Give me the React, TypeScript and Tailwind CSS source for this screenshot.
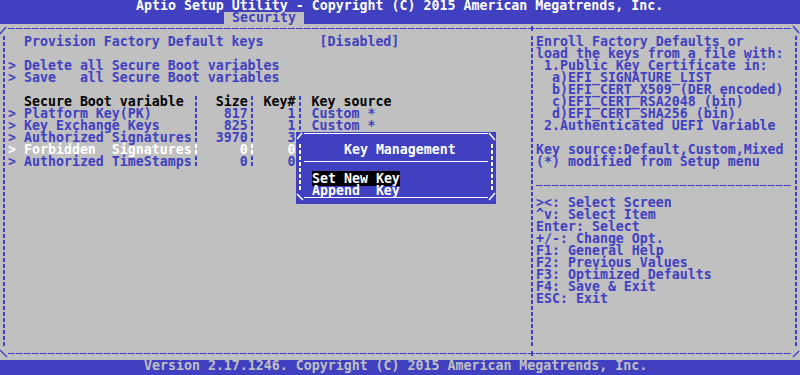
import React from "react";

type Entry = { name: string; size: string; n: string; src: string; hot?: boolean };

const vars: Entry[] = [
  { name: "Platform Key(PK)", size: "817", n: "1", src: "Custom *" },
  { name: "Key Exchange Keys", size: "825", n: "1", src: "Custom *" },
  { name: "Authorized Signatures", size: "3970", n: "3", src: "Custom *" },
  { name: "Forbidden  Signatures", size: "0", n: "0", src: "No Keys", hot: true },
  { name: "Authorized TimeStamps", size: "0", n: "0", src: "No Keys" },
];

const help = [
  "Enroll Factory Defaults or",
  "load the keys from a file with:",
  " 1.Public Key Certificate in:",
  "  a)EFI_SIGNATURE_LIST",
  "  b)EFI_CERT_X509 (DER encoded)",
  "  c)EFI_CERT_RSA2048 (bin)",
  "  d)EFI_CERT_SHA256 (bin)",
  " 2.Authenticated UEFI Variable",
  "",
  "Key source:Default,Custom,Mixed",
  "(*) modified from Setup menu",
  "",
];

const keys = [
  "><: Select Screen",
  "^v: Select Item",
  "Enter: Select",
  "+/-: Change Opt.",
  "F1: General Help",
  "F2: Previous Values",
  "F3: Optimized Defaults",
  "F4: Save & Exit",
  "ESC: Exit",
];

// broken bar inside one 8x12 text cell, colour comes from the text colour
function Dash({ className = "" }: { className?: string }) {
  return (
    <span className={`inline-block w-2 h-3 align-top ${className}`}>
      <span className="block ml-[3px] w-[2px] h-full bg-[repeating-linear-gradient(180deg,currentColor_0px,currentColor_4px,transparent_4px,transparent_6px)]" />
    </span>
  );
}

function VLine() {
  return (
    <div className="w-2 shrink-0 self-stretch">
      <div className="ml-[3px] w-[2px] h-full bg-[repeating-linear-gradient(180deg,#4040c0_0px,#4040c0_4px,transparent_4px,transparent_6px)]" />
    </div>
  );
}

function Cell({ d, junction }: { d?: string; junction?: { y: number } }) {
  return (
    <svg width="8" height="12" className="block shrink-0">
      {d && <path d={d} stroke="currentColor" strokeWidth="1.5" fill="none" />}
      {junction && (
        <>
          <path d={`M0 ${junction.y + 0.5}H7`} stroke="currentColor" strokeWidth="1" />
          <path d={`M4 ${junction.y - 2}V${junction.y + 3}`} stroke="currentColor" strokeWidth="2" />
        </>
      )}
    </svg>
  );
}

function Border({ bottom }: { bottom?: boolean }) {
  const line = bottom ? "mt-[5px]" : "mt-[4px]";
  return (
    <div className="flex h-3 text-[#4040c0]">
      <Cell d={bottom ? "M0 2L7 9" : "M0 10L6 3"} />
      <div className={`w-[520px] h-px ${line} bg-[repeating-linear-gradient(90deg,#4040c0_0px,#4040c0_7px,transparent_7px,transparent_8px)]`} />
      <Cell junction={{ y: bottom ? 5 : 4 }} />
      <div className={`w-[256px] h-px ${line} bg-[repeating-linear-gradient(90deg,#4040c0_0px,#4040c0_7px,transparent_7px,transparent_8px)]`} />
      <Cell d={bottom ? "M1 9L7 3" : "M1 2L7 9"} />
    </div>
  );
}

function Row({ children, className = "" }: { children?: React.ReactNode; className?: string }) {
  return <div className={`h-3 whitespace-pre ${className}`}>{children}</div>;
}

function KeyMenu() {
  return (
    <div className="absolute left-[296px] top-[132px] w-[200px] h-[72px] bg-[#4040c0] text-white flex flex-col">
      <div className="flex h-3">
        <Cell d="M1 7L6 1" />
        <div className="w-[184px] h-px mt-[1px] bg-white" />
        <Cell d="M1 1L7 8" />
      </div>
      <div className="flex h-[48px]">
        <VBarWhite />
        <div className="w-[184px]">
          <Row>{"     Key Management"}</Row>
          <div className="h-3">
            <div className="mt-[5px] h-px bg-white" />
          </div>
          <Row>
            {" "}
            <span className="bg-black">Set New Key</span>
          </Row>
          <Row>{" Append  Key"}</Row>
        </div>
        <VBarWhite />
      </div>
      <div className="flex h-3">
        <Cell d="M1 2L7 8" />
        <div className="w-[184px] h-px mt-[5px] bg-white" />
        <Cell d="M1 8L7 1" />
      </div>
    </div>
  );
}

function VBarWhite() {
  return (
    <div className="w-2 shrink-0">
      <div className="ml-[3px] w-[2px] h-full bg-[repeating-linear-gradient(180deg,#ffffff_0px,#ffffff_4px,transparent_4px,transparent_6px)]" />
    </div>
  );
}

export default function App() {
  return (
    <div className="relative w-[800px] h-[375px] overflow-hidden bg-[#c0c0c0] font-['DejaVu_Sans_Mono',monospace] text-[13.28px] leading-[12px] font-bold">
      <header className="h-6 bg-[#4040c0]">
        <Row className="pl-[136px] text-white">
          Aptio Setup Utility - Copyright (C) 2015 American Megatrends, Inc.
        </Row>
        <Row className="pl-[224px]">
          <span className="inline-block px-2 bg-[#c0c0c0] text-[#4040c0]">Security</span>
        </Row>
      </header>

      <main className="h-[336px] flex flex-col">
        <Border />
        <div className="flex h-[312px]">
          <VLine />
          <div className="w-[520px] text-[#4040c0]">
            <Row>{"  Provision Factory Default keys       [Disabled]"}</Row>
            <Row />
            <Row>{"> Delete all Secure Boot variables"}</Row>
            <Row>{"> Save   all Secure Boot variables"}</Row>
            <Row />
            <Row>
              <span className="text-black">{"  Secure Boot variable "}</span>
              <Dash />
              <span className="text-black">{"  Size"}</span>
              <Dash />
              <span className="text-black">{" Key#"}</span>
              <Dash />
              <span className="text-black">{" Key source"}</span>
            </Row>
            {vars.map((v) => (
              <Row key={v.name} className={v.hot ? "text-white" : ""}>
                {"> " + v.name.padEnd(21)}
                <Dash />
                {v.size.padStart(6)}
                <Dash />
                {v.n.padStart(5)}
                <Dash />
                {" " + v.src}
              </Row>
            ))}
          </div>
          <VLine />
          <div className="w-[256px] text-[#4040c0]">
            {help.map((t, i) => (
              <Row key={i}>{t}</Row>
            ))}
            <div className="h-3">
              <div className="mt-[5px] h-px bg-[repeating-linear-gradient(90deg,#4040c0_0px,#4040c0_7px,transparent_7px,transparent_8px)]" />
            </div>
            {keys.map((t) => (
              <Row key={t}>{t}</Row>
            ))}
          </div>
          <VLine />
        </div>
        <Border bottom />
      </main>

      <footer className="h-[15px] bg-[#4040c0]">
        <Row className="pl-[144px] text-[#c0c0c0]">
          Version 2.17.1246. Copyright (C) 2015 American Megatrends, Inc.
        </Row>
      </footer>

      <KeyMenu />
    </div>
  );
}
